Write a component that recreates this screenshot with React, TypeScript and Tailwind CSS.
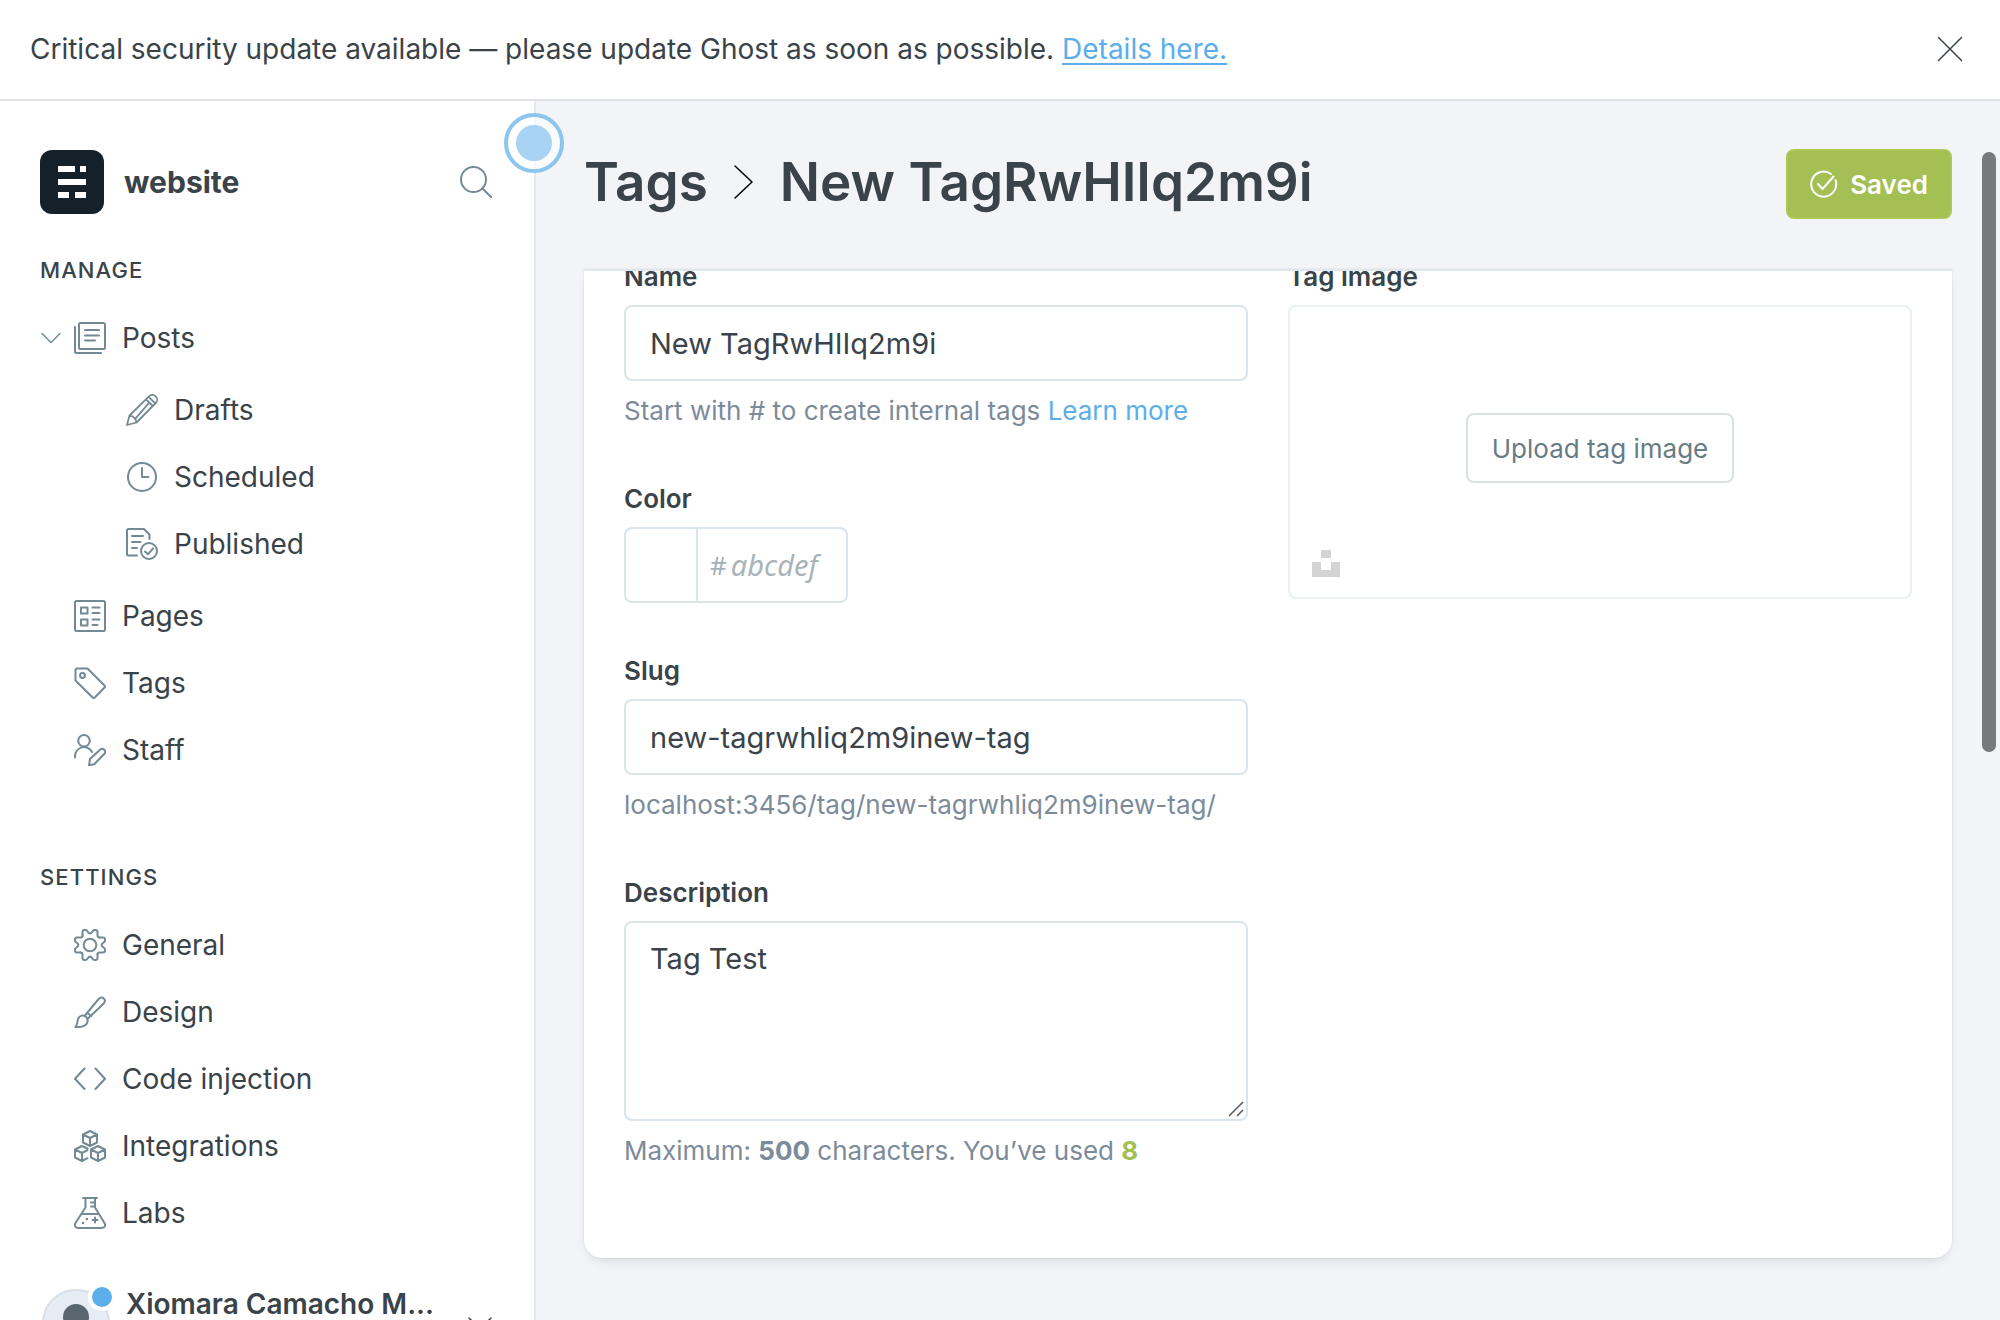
import React from "react";

type IconProps = { className?: string };

function Svg({ className = "size-8", box = "0 0 32 32", width = 2, children }: IconProps & { box?: string; width?: number; children: React.ReactNode }) {
  return (
    <svg viewBox={box} className={className} fill="none" stroke="currentColor" strokeWidth={width} strokeLinecap="round" strokeLinejoin="round" aria-hidden="true">
      {children}
    </svg>
  );
}

const PostsIcon = () => (
  <Svg>
    <rect x="5" y="1" width="26" height="26" rx="1.5" />
    <path d="M1 5v24.500q0 1.500 1.500 1.500H27M11 8h14M11 13.500h14M11 18.500h10" />
  </Svg>
);
const DraftsIcon = () => (
  <Svg width={1.8}>
    <path d="M1 31l2.500-9.500L23 2.300a4.700 4.700 0 0 1 6.700 6.700L10.500 28.500zM3.500 21.500l3.200.8 2.500 2.500 1.300 3.700M20 5.300l6.700 6.700M22.600 2.800l6.600 6.600M9.200 24.800L23.300 8.700" />
  </Svg>
);
const ScheduledIcon = () => (
  <Svg>
    <circle cx="16" cy="16" r="14" />
    <path d="M16 7v9h6.500" />
  </Svg>
);
const PublishedIcon = () => (
  <Svg>
    <path d="M11 27.500H2.500Q1 27.500 1 26V2.500Q1 1 2.500 1H18l5.500 5.500V11M6 8h11M6 14h8.500M6 20h5" />
    <circle cx="23" cy="23" r="8" />
    <path d="M19 23.500l3 2.800 5-6" />
  </Svg>
);
const PagesIcon = () => (
  <Svg>
    <rect x="1" y="1" width="30" height="30" rx="1.500" />
    <path d="M7 7.500h6.500v6H7zM7 19.500h6.500v6H7zM18.500 7.500h7M18.500 13h7M18.500 19.500h7M18.500 25h5" />
  </Svg>
);
const TagsIcon = () => (
  <Svg>
    <path d="M1.500 3Q1.500 1.500 3 1.500h10.500L30.500 18.500q1 1 0 2L20.800 30.500q-1 1-2.200 0L1.500 13.500z" />
    <circle cx="8.500" cy="8.500" r="2.400" />
  </Svg>
);
const StaffIcon = () => (
  <Svg>
    <circle cx="10" cy="6.800" r="5.800" />
    <path d="M1 23.500v-1a9 9 0 0 1 17-4.500M15 31.500l1-6.500L26 15.800a2.900 2.900 0 0 1 4.200 4.200L20.500 30z" />
  </Svg>
);
const gearQuarter = "M8.500 6.500V3q0-2 2-2h1q1 0 1.700 1l1.300 1.700q1.500 1.300 3 0L18.800 2q.7-1 1.700-1h1q2 0 2 2v3.500q0 2 2 2";
const GeneralIcon = () => (
  <Svg>
    {[0, 90, 180, 270].map((turn) => (
      <path key={turn} d={gearQuarter} transform={`rotate(${turn} 16 16)`} />
    ))}
    <circle cx="16" cy="16" r="6.300" />
  </Svg>
);
const DesignIcon = () => (
  <Svg>
    <path d="M1.300 31c2.500-2 1.500-5 3-8.500 1.300-3 5-4 7.300-2s3 5.500.5 8c-2.500 2.600-7 2.800-10.800 2.500zM11 19.500L24.500 3.200c3.800-4 8.600.6 5 4.600L14 22.500M13.500 17l3.600 3" />
  </Svg>
);
const CodeIcon = () => (
  <Svg>
    <path d="M10.500 5.500L1 15.800l9.500 10.200M21.500 5.500L31 15.800 21.500 26" />
  </Svg>
);
const IntegrationsIcon = () => (
  <Svg>
    <path d="M16 1l7 3.500v8L16 16l-7-3.500v-8zM9 4.500L16 8l7-3.500M16 8v8" />
    <path d="M13.500 18.500L8 16l-7 3.500v8L8 31l5.500-2.800M1 19.500L8 23l5.500-2.800M8 23v8" />
    <path d="M24 16l7 3.500v8L24 31l-7-3.500v-8zM17 19.500l7 3.500 7-3.500M24 23v8" />
  </Svg>
);
const LabsIcon = () => (
  <Svg>
    <path d="M9 1h14M11.500 1v9.500L1.800 25.500C-.2 29 1.500 31 4.500 31h23c3 0 4.700-2 2.700-5.500L21 10.500V1M17 5.500h4M17 9.500h4M7.500 17h17.500M21 20.500v5M18.500 23h5" />
    <path d="M12.800 22h.1M9 26h.1" strokeWidth="2.500" />
  </Svg>
);

type Item = { label: string; icon: React.ReactNode };
const postViews: Item[] = [
  { label: "Drafts", icon: <DraftsIcon /> },
  { label: "Scheduled", icon: <ScheduledIcon /> },
  { label: "Published", icon: <PublishedIcon /> },
];
const manage: Item[] = [
  { label: "Pages", icon: <PagesIcon /> },
  { label: "Tags", icon: <TagsIcon /> },
  { label: "Staff", icon: <StaffIcon /> },
];
const settings: Item[] = [
  { label: "General", icon: <GeneralIcon /> },
  { label: "Design", icon: <DesignIcon /> },
  { label: "Code injection", icon: <CodeIcon /> },
  { label: "Integrations", icon: <IntegrationsIcon /> },
  { label: "Labs", icon: <LabsIcon /> },
];

function NavList({ items, nested = false }: { items: Item[]; nested?: boolean }) {
  return (
    <ul>
      {items.map((item) => (
        <li key={item.label}>
          <a href="#" className={`flex h-[67px] items-center gap-4 text-[28px] ${nested ? "pl-[126px]" : "pl-[74px]"}`}>
            <span className="text-[#738a94]">{item.icon}</span>
            {item.label}
          </a>
        </li>
      ))}
    </ul>
  );
}

function Sidebar() {
  return (
    <aside className="relative flex w-[536px] shrink-0 flex-col border-r-2 border-[#e5e9ed] bg-white text-[#394349]">
      <div className="flex items-center pt-[49px] pr-[42px] pl-10">
        <span className="flex size-16 items-center justify-center rounded-xl bg-[#15212a]">
          <svg viewBox="0 0 28 34" className="h-[34px] w-7" fill="#fff" aria-hidden="true">
            <path d="M0 1h17v6H0zM22 1h6v6h-6zM0 14h28v6H0zM0 27h11v6H0zM17 27h11v6H17z" />
          </svg>
        </span>
        <span className="ml-5 flex-1 text-[30px] font-bold">website</span>
        <button type="button" aria-label="Search" className="text-[#738a94]">
          <Svg>
            <circle cx="13.500" cy="13.500" r="12.500" />
            <path d="M22.500 22.500L31.500 31.500" />
          </Svg>
        </button>
      </div>
      <h2 className="mt-[42px] pl-10 text-[22px] leading-7 font-medium tracking-wider">MANAGE</h2>
      <nav aria-label="Manage" className="mt-5">
        <div className="flex h-[67px] items-center text-[28px]">
          <button type="button" aria-label="Collapse posts" className="ml-[41px] text-[#738a94]">
            <Svg className="h-3 w-5" box="0 0 20 12" width={1.5}>
              <path d="M1 1.500l9 9 9-9" />
            </Svg>
          </button>
          <a href="#" className="ml-[13px] flex items-center gap-4">
            <span className="text-[#738a94]"><PostsIcon /></span>
            Posts
          </a>
        </div>
        <div className="my-[5px]">
          <NavList items={postViews} nested />
        </div>
        <NavList items={manage} />
      </nav>
      <h2 className="mt-20 pl-10 text-[22px] leading-7 font-medium tracking-wider">SETTINGS</h2>
      <nav aria-label="Settings" className="mt-5">
        <NavList items={settings} />
      </nav>
      <div className="mt-[43px] flex items-start pl-[42px]">
        <span className="relative flex h-[68px] w-[68px] shrink-0 justify-center rounded-full border-2 border-[#d8dfe6] bg-[#e6edf4]">
          <svg viewBox="0 0 64 64" className="size-16" fill="#5a666d" aria-hidden="true">
            <circle cx="32" cy="26" r="13" />
            <path d="M8 58q4-16 24-16t24 16z" />
          </svg>
          <span className="absolute -top-2 -right-2 size-7 rounded-full border-4 border-white bg-[#5baee9]" />
        </span>
        <span className="ml-4 w-[310px] whitespace-nowrap text-[28px] leading-[30px] font-semibold">Xiomara Camacho M...</span>
        <button type="button" aria-label="Account menu" className="mt-7 ml-8">
          <Svg className="h-3.5 w-6" box="0 0 24 14" width={1.5}>
            <path d="M1 1l11 11L23 1" />
          </Svg>
        </button>
      </div>
      <button type="button" aria-label="Show tip" className="absolute top-3 -right-[30px] z-10 flex size-15 items-center justify-center rounded-full border-4 border-[#8cc5ee] bg-white/60">
        <span className="size-9 rounded-full bg-[#a8d3f4]" />
      </button>
    </aside>
  );
}

const labelClass = "block text-[26px] leading-8 font-semibold text-[#394349]";
const boxClass = "w-full rounded-lg border-2 border-[#dae4eb] bg-white px-6 text-[29px] text-[#394349]";
const helpClass = "mt-2.5 text-[26px] leading-10 text-[#7c8b9a]";

function TagForm() {
  return (
    <form className="-mt-2.5 grid grid-cols-2 gap-10 px-10 pb-[87px]">
      <div>
        <label htmlFor="name" className={labelClass}>Name</label>
        <input id="name" defaultValue="New TagRwHIIq2m9i" className={boxClass + " mt-3 h-[76px]"} />
        <p className={helpClass}>
          Start with # to create internal tags <a href="#" className="text-[#5baee9]">Learn more</a>
        </p>
        <label htmlFor="color" className={labelClass + " mt-[52px]"}>Color</label>
        <div className="mt-3 flex h-[76px] w-56 overflow-hidden rounded-lg border-2 border-[#dae4eb]">
          <input type="color" aria-label="Pick color" className="w-[70px] opacity-0" />
          <span className="flex flex-1 items-center gap-1 border-l-2 border-[#dae4eb] pl-3 font-['Noto_Sans',sans-serif] text-[29px] text-[#a3b0b9]">
            <span className="text-[26px]">#</span>
            <input id="color" placeholder="abcdef" className="w-full min-w-0 italic placeholder:text-[#a9b4ba]" />
          </span>
        </div>
        <label htmlFor="slug" className={labelClass + " mt-[52px]"}>Slug</label>
        <input id="slug" defaultValue="new-tagrwhliq2m9inew-tag" className={boxClass + " mt-3 h-[76px]"} />
        <p className={helpClass}>localhost:3456/tag/new-tagrwhliq2m9inew-tag/</p>
        <label htmlFor="description" className={labelClass + " mt-[52px]"}>Description</label>
        <div className="relative mt-3">
          <textarea id="description" defaultValue="Tag Test" className={boxClass + " block h-[200px] resize-none py-4 leading-[40px]"} />
          <svg viewBox="0 0 16 16" className="pointer-events-none absolute right-1 bottom-1 size-4" stroke="#55595c" strokeWidth="1.5" aria-hidden="true">
            <path d="M1 15L15 1M9 15l6-6" />
          </svg>
        </div>
        <p className={helpClass}>
          Maximum: <b>500</b> characters. You’ve used <b className="text-[#a4bf53]">8</b>
        </p>
      </div>
      <div>
        <h2 className={labelClass}>Tag image</h2>
        <div className="relative mt-3 flex h-[294px] items-center justify-center rounded-lg border-2 border-[#e9f0f6] pb-2">
          <button type="button" className="h-[70px] rounded-lg border-2 border-[#d6e1e7] px-6 text-[26px] text-[#687c84]">Upload tag image</button>
          <button type="button" aria-label="Choose from Unsplash" className="absolute bottom-5 left-[22px]">
            <svg viewBox="0 0 28 27" className="h-[27px] w-7" fill="#d4d4d4" aria-hidden="true">
              <path d="M9 0h10v8H9zM0 12h9v8h10v-8h9v15H0z" />
            </svg>
          </button>
        </div>
      </div>
    </form>
  );
}

export default function App() {
  return (
    <div className="flex h-screen flex-col overflow-hidden bg-[#f2f4f8] font-['Inter',sans-serif] text-[#394349]">
      <div className="flex h-[101px] shrink-0 items-center justify-between border-b-2 border-[#e0e2e4] bg-white pr-[37px] pb-0.5 pl-[30px] text-[28px]">
        <p>
          Critical security update available — please update Ghost as soon as possible.{" "}
          <a href="#" className="text-[#5baee9] underline underline-offset-4">Details here.</a>
        </p>
        <button type="button" aria-label="Close">
          <Svg className="size-[26px]" box="0 0 26 26" width={1.5}>
            <path d="M1.500 1.500l23 23M24.500 1.500l-23 23" />
          </Svg>
        </button>
      </div>
      <div className="flex min-h-0 flex-1">
        <Sidebar />
        <main className="relative min-w-0 flex-1 px-12">
          <header className="flex h-[168px] items-start justify-between pt-12">
            <h1 className="flex items-center text-[53px] leading-[66px] font-semibold">
              <a href="#">Tags</a>
              <Svg className="mx-[26px] h-9 w-5 text-black" box="0 0 20 36" width={1.5}>
                <path d="M1 2l17 16L1 34" />
              </Svg>
              New TagRwHIIq2m9i
            </h1>
            <button type="button" className="flex h-[70px] items-center gap-3 rounded-lg border-2 border-[#aac855] bg-[#a4bf53] px-[22px] text-[26px] font-semibold text-white">
              <Svg className="size-7" box="0 0 28 28">
                <path d="M25.500 10A12.500 12.500 0 1 1 21 4M8 14l4.500 5L23.500 6.500" />
              </Svg>
              Saved
            </button>
          </header>
          <section className="overflow-hidden rounded-b-[18px] border-t-2 border-[#dfe8ef] bg-white shadow-[0_0_2px_rgba(0,0,0,0.12),0_6px_14px_-6px_rgba(0,0,0,0.16)]">
            <TagForm />
          </section>
          <div className="absolute top-[51px] right-1 h-[600px] w-3.5 rounded-full bg-[#78797c]" />
        </main>
      </div>
    </div>
  );
}
